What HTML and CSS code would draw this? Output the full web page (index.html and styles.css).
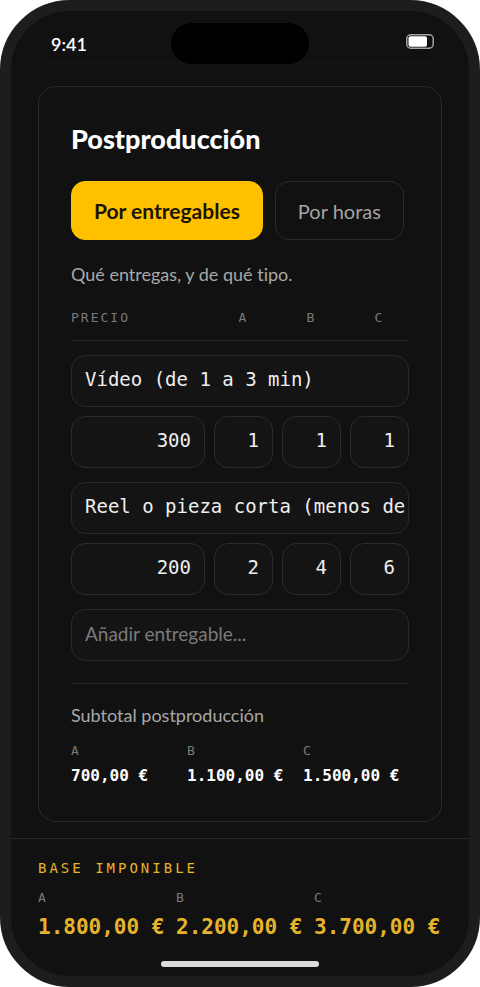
FILE: index.html
```html
<!DOCTYPE html>
<html lang="es">
  <head>
    <meta charset="utf-8">
    <title>Postproducción</title>
    <meta
      name="viewport"
      content="width=device-width, initial-scale=1.0"
    />
    <link rel="stylesheet" href="styles.css">
  </head>
  <body>
    <div class="phone">
      <header class="status-bar">
        <span class="time">9:41</span>
        <svg class="battery" viewBox="0 0 28 15" aria-hidden="true">
          <rect x="0.8" y="0.8" width="26.4" height="13.4" rx="4" fill="none" stroke="#a3a3a3" stroke-width="1.5" />
          <rect x="2.5" y="2.2" width="18.5" height="10.6" rx="2" fill="#fff" />
        </svg>
        <div class="island"></div>
      </header>

      <main class="content">
        <section class="card">
          <h1>Postproducción</h1>

          <div class="tabs">
            <button class="tab active" type="button">Por entregables</button>
            <button class="tab" type="button">Por horas</button>
          </div>

          <p class="hint">Qué entregas, y de qué tipo.</p>

          <form class="items">
            <div class="row head">
              <span>PRECIO</span>
              <span>A</span>
              <span>B</span>
              <span>C</span>
            </div>

            <div class="row">
              <input class="name" type="text" aria-label="Entregable" value="Vídeo (de 1 a 3 min)">
              <input type="text" inputmode="numeric" aria-label="Precio" value="300">
              <input type="text" inputmode="numeric" aria-label="Cantidad A" value="1">
              <input type="text" inputmode="numeric" aria-label="Cantidad B" value="1">
              <input type="text" inputmode="numeric" aria-label="Cantidad C" value="1">
            </div>

            <div class="row">
              <input class="name" type="text" aria-label="Entregable" value="Reel o pieza corta (menos de">
              <input type="text" inputmode="numeric" aria-label="Precio" value="200">
              <input type="text" inputmode="numeric" aria-label="Cantidad A" value="2">
              <input type="text" inputmode="numeric" aria-label="Cantidad B" value="4">
              <input type="text" inputmode="numeric" aria-label="Cantidad C" value="6">
            </div>

            <div class="row">
              <input class="name new" type="text" aria-label="Añadir entregable" placeholder="Añadir entregable...">
            </div>
          </form>

          <div class="subtotal">
            <p>Subtotal postproducción</p>
            <dl class="totals">
              <div><dt>A</dt><dd>700,00 €</dd></div>
              <div><dt>B</dt><dd>1.100,00 €</dd></div>
              <div><dt>C</dt><dd>1.500,00 €</dd></div>
            </dl>
          </div>
        </section>
      </main>

      <footer class="base">
        <h2>BASE IMPONIBLE</h2>
        <dl class="totals">
          <div><dt>A</dt><dd>1.800,00 €</dd></div>
          <div><dt>B</dt><dd>2.200,00 €</dd></div>
          <div><dt>C</dt><dd>3.700,00 €</dd></div>
        </dl>
        <div class="home-bar"></div>
      </footer>
    </div>
  </body>
</html>
```
FILE: styles.css
```css
* {
  box-sizing: border-box;
}

body {
  margin: 0;
  background-color: #fff;
  font-family: Lato, sans-serif;
  font-variant-ligatures: none;
  color: #fff;
}

h1,
h2,
p,
dl,
dd {
  margin: 0;
}

.phone {
  display: flex;
  flex-direction: column;
  min-height: 100vh;
  background-color: #111;
  border: 11px solid #1d1d1d;
  border-radius: 70px;
  overflow: hidden;
}

/* Status bar */
.status-bar {
  position: relative;
  display: flex;
  align-items: center;
  justify-content: space-between;
  height: 52px;
  margin: 0 35px;
  padding: 14px 0 0 5px;
  border-bottom: 1px solid #191919;
}

.time {
  font-size: 18px;
  line-height: 24px;
  font-weight: 600;
}

.battery {
  width: 28px;
  height: 15px;
  margin-bottom: 5px;
}

.island {
  position: absolute;
  top: 12px;
  left: 50%;
  width: 138px;
  height: 41px;
  background-color: #000;
  border-radius: 21px;
  transform: translateX(-50%);
}

.content {
  flex: 1;
  padding: 23px 27px 16px;
}

.card {
  padding: 35px 32px 30px;
  border: 1px solid #2b2b2b;
  border-radius: 18px;
}

h1 {
  font-size: 27px;
  line-height: 34px;
  font-weight: 900;
}

/* Tabs */
.tabs {
  display: flex;
  gap: 12px;
  margin-top: 25px;
}

.tab {
  height: 59px;
  padding: 0 22px;
  background-color: transparent;
  border: 1px solid #2b2b2b;
  border-radius: 14px;
  font-family: inherit;
  font-size: 20px;
  color: #a3a3a3;
  cursor: pointer;
}

.tab.active {
  background-color: #ffc000;
  border-color: #ffc000;
  font-size: 21px;
  font-weight: 700;
  color: #1a1400;
}

.hint,
.subtotal p {
  font-size: 18px;
  line-height: 24px;
  color: #a8a8a8;
}

.hint {
  margin-top: 22px;
}

/* Deliverables */
.items {
  display: flex;
  flex-direction: column;
  gap: 14px;
  margin-top: 22px;
}

.row {
  display: grid;
  grid-template-columns: 1fr 59px 59px 59px;
  gap: 9px;
}

.head {
  padding-bottom: 12px;
  border-bottom: 1px solid #2b2b2b;
  font-family: "DejaVu Sans Mono", monospace;
  font-size: 13px;
  line-height: 20px;
  letter-spacing: 2px;
  text-align: center;
  color: #7a7a7a;
}

.head span:first-child {
  text-align: left;
}

input {
  width: 100%;
  height: 52px;
  padding: 0 13px 4px;
  background-color: #141414;
  border: 1px solid #2b2b2b;
  border-radius: 14px;
  font-family: "DejaVu Sans Mono", monospace;
  font-size: 19px;
  text-align: right;
  color: #eee;
}

.name {
  grid-column: 1 / -1;
  padding-right: 3px;
  text-align: left;
}

.new {
  font-family: inherit;
}

.new::placeholder {
  color: #7a7a7a;
}

/* Totals */
.subtotal {
  margin-top: 22px;
  padding-top: 19px;
  border-top: 1px solid #2b2b2b;
}

.totals {
  display: grid;
  grid-template-columns: repeat(3, 1fr);
  gap: 10px;
  font-family: "DejaVu Sans Mono", monospace;
  white-space: nowrap;
}

.totals dt {
  font-size: 13px;
  line-height: 20px;
  color: #7a7a7a;
}

.totals dd {
  font-size: 16px;
  line-height: 30px;
  font-weight: 700;
}

.subtotal .totals {
  margin-top: 14px;
}

.base {
  padding: 19px 27px 9px;
  border-top: 1px solid #2b2b2b;
}

.base h2 {
  font-family: "DejaVu Sans Mono", monospace;
  font-size: 14px;
  line-height: 20px;
  font-weight: 400;
  letter-spacing: 3px;
  color: #e6b42c;
}

.base .totals {
  margin-top: 10px;
}

.base dd {
  font-size: 21px;
  line-height: 38px;
  color: #e6b42c;
}

.home-bar {
  width: 158px;
  height: 6px;
  margin: 15px auto 0;
  background-color: #dcdcdc;
  border-radius: 3px;
}
```
